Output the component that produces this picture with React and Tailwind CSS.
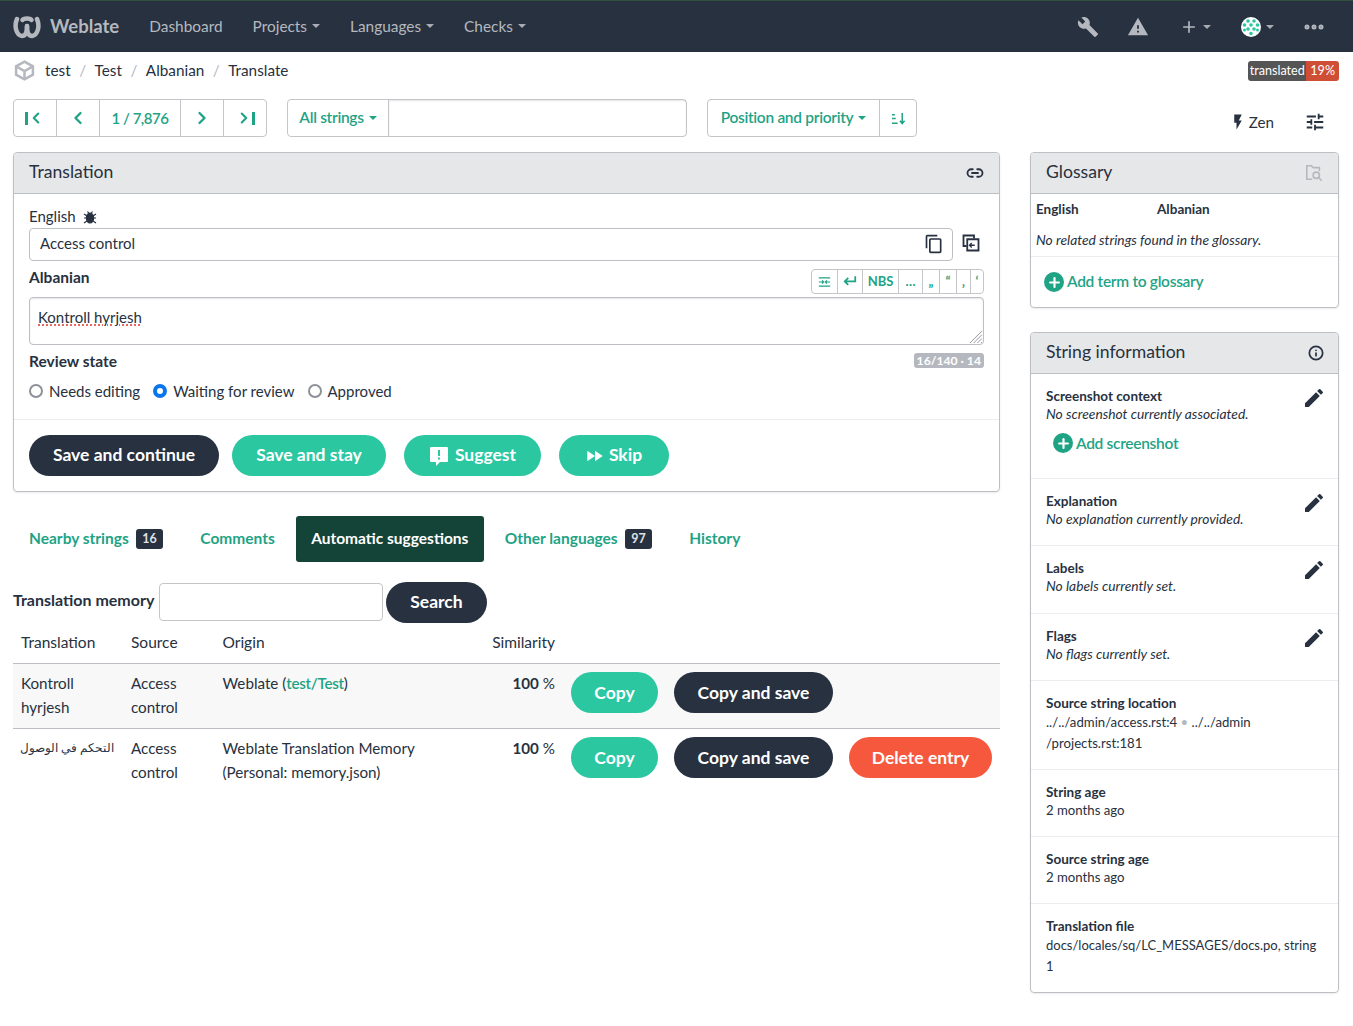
import { Plus, Ellipsis, Link2, Info, ChevronLeft, ChevronRight } from 'lucide-react';

const Caret = ({ className = 'border-t-[#a9adb3]' }) => (
  <span className={`ml-[5px] inline-block h-0 w-0 border-x-[4px] border-t-[4px] border-x-transparent ${className}`} />
);

const PencilIcon = () => (
  <svg viewBox="0 0 24 24" className="h-6 w-6 fill-[#273140]">
    <path d="M3 17.25V21h3.75L17.81 9.94l-3.75-3.75L3 17.25zM20.71 7.04a1 1 0 0 0 0-1.41l-2.34-2.34a1 1 0 0 0-1.41 0l-1.83 1.83 3.75 3.75 1.83-1.83z" />
  </svg>
);

const PlusCircle = () => (
  <span className="flex h-5 w-5 items-center justify-center rounded-full bg-[#1fa385]">
    <Plus size={15} strokeWidth={3.5} className="text-white" />
  </span>
);

const CopyIcon = ({ className }) => (
  <svg viewBox="0 0 24 24" className={`fill-[#273140] ${className}`}>
    <path d="M16 1H4a2 2 0 0 0-2 2v14h2V3h12V1zm3 4H8a2 2 0 0 0-2 2v14a2 2 0 0 0 2 2h11a2 2 0 0 0 2-2V7a2 2 0 0 0-2-2zm0 16H8V7h11v14z" />
  </svg>
);

function Navbar() {
  const links = ['Projects', 'Languages', 'Checks'];
  return (
    <nav className="flex h-[52px] items-center border-t border-[#31503f] bg-[#273140] pl-[13px] pr-[27px] text-[#b5b9bf]">
      <svg viewBox="0 0 28 24" className="h-[24px] w-[28px] fill-none stroke-[#b5b9bf]" strokeWidth="4.500" strokeLinecap="round">
        <path d="M4 4c-3 7-1 16 5 17 4 0 5-5 5-10" />
        <path d="M24 4c3 7 1 16-5 17-4 0-5-5-5-10" />
        <path d="M9.500 5c1-2 8-2 9 0" />
      </svg>
      <span className="ml-[9px] text-[18.500px] font-bold">Weblate</span>
      <span className="ml-[30px] text-[15.400px]">Dashboard</span>
      {links.map((label) => (
        <span key={label} className="ml-[30px] flex items-center text-[15.400px]">
          {label}
          <Caret />
        </span>
      ))}
      <div className="ml-auto flex items-center">
        <svg viewBox="0 0 24 24" className="h-[22px] w-[22px] fill-[#b5b9bf]">
          <path d="M22.7 19l-9.100-9.100c.9-2.300.4-5-1.500-6.900-2-2-5-2.400-7.400-1.300L9 6 6 9 1.600 4.700C.4 7.100.9 10.100 2.900 12.100c1.900 1.900 4.600 2.400 6.900 1.500l9.100 9.100c.4.4 1 .4 1.400 0l2.300-2.300c.5-.4.5-1.100.1-1.400z" />
        </svg>
        <svg viewBox="0 0 24 24" className="ml-[28px] h-[22px] w-[22px] fill-[#b5b9bf]">
          <path d="M1 21h22L12 2 1 21zm12-3h-2v-2h2v2zm0-4h-2v-4h2v4z" />
        </svg>
        <Plus size={18} strokeWidth={2.200} className="ml-[31px]" />
        <Caret />
        <svg viewBox="0 0 20 20" className="ml-[30px] h-5 w-5">
          <circle cx="10" cy="10" r="10" fill="#fff" />
          <g fill="#2bc79f">
            <circle cx="7" cy="4" r="1.800" />
            <circle cx="13" cy="4" r="1.800" />
            <circle cx="3.500" cy="8" r="1.800" />
            <circle cx="10" cy="8" r="1.800" />
            <circle cx="16.500" cy="8" r="1.800" />
            <circle cx="7" cy="12" r="1.800" />
            <circle cx="13" cy="12" r="1.800" />
            <circle cx="3.500" cy="13" r="1.500" />
            <circle cx="16.500" cy="13" r="1.500" />
            <circle cx="10" cy="16.500" r="1.800" />
          </g>
        </svg>
        <Caret />
        <Ellipsis size={24} strokeWidth={3} className="ml-[28px]" />
      </div>
    </nav>
  );
}

function Breadcrumb() {
  const crumbs = ['test', 'Test', 'Albanian', 'Translate'];
  return (
    <div className="flex h-[38px] items-center px-[14px] pb-[1px] text-[15.300px] text-[#273140]">
      <svg viewBox="0 0 20 20" className="mr-[10px] h-[21px] w-[21px] fill-none stroke-[#b5b9bf]" strokeWidth="2.400">
        <path d="M10 1.500 18 6v8l-8 4.500L2 14V6l8-4.500z" />
        <path d="M2 6l8 4.500L18 6M10 10.500v8" />
      </svg>
      {crumbs.map((crumb, index) => (
        <span key={crumb} className="flex items-center">
          {index > 0 && <span className="mx-[8.500px] text-[#b5b9bf]">/</span>}
          {crumb}
        </span>
      ))}
      <span className="ml-auto flex h-5 overflow-hidden rounded-[3px] text-[12.600px] leading-5 text-white">
        <span className="bg-[#555] px-[1.500px]">translated</span>
        <span className="bg-[#cf4f36] px-[4px]">19%</span>
      </span>
    </div>
  );
}

function Toolbar() {
  const cell = 'flex h-full items-center justify-center border-l border-[#c3c5c9] first:border-l-0';
  return (
    <div className="mt-[9px] flex h-[38px] items-center text-[15.500px] font-semibold tracking-[-0.3px] text-[#1fa385]">
      <div className="flex h-full w-[254px] rounded border border-[#c3c5c9]">
        <span className={`${cell} w-[42px]`}>
          <span className="h-[13px] w-[2.500px] bg-[#1fa385]" />
          <ChevronLeft size={18} strokeWidth={2.800} className="-ml-[1px]" />
        </span>
        <span className={`${cell} w-[43px]`}><ChevronLeft size={20} strokeWidth={2.800} /></span>
        <span className={`${cell} w-[81px] text-[15px] tracking-[-0.5px]`}>1 / 7,876</span>
        <span className={`${cell} w-[43px]`}><ChevronRight size={20} strokeWidth={2.800} /></span>
        <span className={`${cell} flex-1`}>
          <ChevronRight size={18} strokeWidth={2.800} className="-mr-[1px]" />
          <span className="h-[13px] w-[2.500px] bg-[#1fa385]" />
        </span>
      </div>
      <div className="ml-5 flex h-full w-[400px] rounded border border-[#c3c5c9]">
        <span className={`${cell} w-[100px]`}>All strings<Caret className="border-t-[#1fa385]" /></span>
        <span className={`${cell} flex-1 shadow-[inset_0_1px_2px_rgba(0,0,0,0.1)]`} />
      </div>
      <div className="ml-5 flex h-full w-[210px] rounded border border-[#c3c5c9]">
        <span className={`${cell} w-[171px]`}>Position and priority<Caret className="border-t-[#1fa385]" /></span>
        <span className={`${cell} flex-1`}>
          <svg viewBox="0 0 16 14" className="h-[13px] w-[15px] stroke-[#1fa385]" strokeWidth="1.600" fill="none">
            <path d="M1 3h3M1 7h4M1 12h6M12 1v11M9.500 9.500 12 12.500l2.500-3" />
          </svg>
        </span>
      </div>
      <div className="ml-auto flex items-center pt-[8px] text-[15.200px] font-normal tracking-normal text-[#273140]">
        <svg viewBox="0 0 24 24" className="h-[18px] w-[18px] fill-[#273140]">
          <path d="M7 2v11h3v9l7-12h-4l4-8z" />
        </svg>
        <span className="ml-[2px]">Zen</span>
        <svg viewBox="0 0 24 24" className="ml-[30px] mr-[13px] h-[22px] w-[22px] fill-[#273140]">
          <path d="M3 17v2h6v-2H3zM3 5v2h10V5H3zm10 16v-2h8v-2h-8v-2h-2v6h2zM7 9v2H3v2h4v2h2V9H7zm14 4v-2H11v2h10zm-6-4h2V7h4V5h-4V3h-2v6z" />
        </svg>
      </div>
    </div>
  );
}

function Pill({ tone, className = '', children }) {
  const tones = {
    dark: 'bg-[#273140]',
    green: 'bg-[#2bc7a1]',
    red: 'bg-[#f6583e]',
  };
  return (
    <span className={`flex h-[41px] items-center justify-center rounded-[21px] text-[17.500px] font-bold text-white ${tones[tone]} ${className}`}>
      {children}
    </span>
  );
}

function PanelHeader({ children }) {
  return (
    <header className="flex h-[41px] items-center justify-between rounded-t border-b border-[#bcbfc4] bg-[#e6e7e9] px-[15px] pb-[1px] text-[17.600px] text-[#273140]">
      {children}
    </header>
  );
}

function TranslationPanel() {
  const tools = [
    ['tab', 25],
    ['ret', 25],
    ['NBS', 36],
    ['…', 24],
    ['„', 17],
    ['“', 17],
    ['‚', 14],
    ['‘', 13],
  ];
  return (
    <section className="rounded border border-[#bcbfc4] shadow-[0_1px_2px_rgba(0,0,0,0.08)]">
      <PanelHeader>
        Translation
        <Link2 size={18} strokeWidth={2.400} />
      </PanelHeader>
      <div className="px-[15px] pt-[11px] text-[15px] text-[#273140]">
        <div className="flex h-[23px] items-center">
          English
          <svg viewBox="0 0 14 14" className="ml-[7px] h-[14px] w-[14px] fill-[#273140] stroke-[#273140]" strokeWidth="1.200">
            <ellipse cx="7" cy="8" rx="3.600" ry="5" />
            <path d="M1 4l3 2M13 4l-3 2M1 8h3M13 8h-3M1 13l3-2M13 13l-3-2M4.500 1.500 6 3.500M9.500 1.500 8 3.500" fill="none" />
          </svg>
        </div>
        <div className="flex items-center">
          <div className="flex h-[33px] w-[924px] items-center justify-between rounded border border-[#bcbfc4] pb-[2px] pl-[10px] pr-[8px]">
            Access control
            <CopyIcon className="h-5 w-5" />
          </div>
          <svg viewBox="0 0 24 24" className="-mt-[3px] ml-[9px] h-[18px] w-[18px] fill-none stroke-[#273140]" strokeWidth="2.400">
            <path d="M16 6V2H2v14h4" />
            <path d="M7 7h15v15H7z" />
            <path d="M17 15h-7M13 12l-3 3 3 3" strokeWidth="1.800" />
          </svg>
        </div>
        <div className="mt-[8px] flex h-[25px] items-start justify-between">
          <b className="text-[15.500px] font-bold leading-4">Albanian</b>
          <div className="flex h-[25px] rounded border border-[#c3c5c9] text-[13px] font-bold text-[#1fa385]">
            {tools.map(([label, width]) => (
              <span
                key={label}
                style={{ width }}
                className="flex items-center justify-center border-l border-[#c3c5c9] first:border-l-0"
              >
                {label === 'tab' ? (
                  <svg viewBox="0 0 16 14" className="h-[12px] w-[13px] fill-none stroke-[#1fa385]" strokeWidth="1.400">
                    <path d="M1 2h14M1 12h14M1 7h6M5 5l2 2-2 2M15 7H9M11 5 9 7l2 2" />
                  </svg>
                ) : label === 'ret' ? (
                  <svg viewBox="0 0 16 14" className="-mt-[3px] h-[13px] w-[14px] fill-none stroke-[#1fa385]" strokeWidth="2">
                    <path d="M14 2v6H2M6 4 2 8l4 4" />
                  </svg>
                ) : (
                  label
                )}
              </span>
            ))}
          </div>
        </div>
        <div className="relative mt-[3px] h-[48px] rounded border border-[#bcbfc4] pl-[8px] pt-[8px] shadow-[inset_0_1px_2px_rgba(0,0,0,0.1)]">
          <span className="underline decoration-[#e0342b] decoration-dotted underline-offset-2">Kontroll hyrjesh</span>
          <svg viewBox="0 0 14 14" className="absolute bottom-[1px] right-[1px] h-[13px] w-[13px] stroke-[#8d9198]" strokeWidth="1">
            <path d="M1 14 14 1M5 14l9-9M9 14l5-5M13 14l1-1" />
          </svg>
        </div>
        <div className="mt-[7px] flex h-[20px] items-center justify-between">
          <b className="text-[15.500px] font-bold">Review state</b>
          <span className="-mt-[4px] rounded-[3px] bg-[#b5b9bf] px-[3px] text-[12.200px] font-bold leading-[15px] text-white">16/140 · 14</span>
        </div>
        <div className="mt-[9px] flex h-[20px] items-center">
          <span className="h-[14px] w-[14px] rounded-full border-2 border-[#8d9198]" />
          <span className="ml-[6px]">Needs editing</span>
          <span className="ml-[13px] h-[14px] w-[14px] rounded-full border-[4px] border-[#0a75ec]" />
          <span className="ml-[6px]">Waiting for review</span>
          <span className="ml-[13px] h-[14px] w-[14px] rounded-full border-2 border-[#8d9198]" />
          <span className="ml-[6px]">Approved</span>
        </div>
      </div>
      <div className="mt-[18px] flex gap-[13px] border-t border-[#eceded] p-[15px]">
        <Pill tone="dark" className="w-[190px]">Save and continue</Pill>
        <Pill tone="green" className="mr-[5px] w-[154px]">Save and stay</Pill>
        <Pill tone="green" className="mr-[5px] w-[137px]">
          <svg viewBox="0 0 20 20" className="mr-[6px] h-5 w-5">
            <path fill="#fff" d="M2 1h16a1 1 0 0 1 1 1v13a1 1 0 0 1-1 1h-7l-4 4v-4H2a1 1 0 0 1-1-1V2a1 1 0 0 1 1-1z" />
            <path fill="#2bc7a1" d="M9 4h2v6H9zM9 11.500h2v2H9z" />
          </svg>
          Suggest
        </Pill>
        <Pill tone="green" className="w-[110px]">
          <svg viewBox="0 0 20 14" className="mr-[5px] h-[12px] w-[18px] fill-white">
            <path d="M1 1l9 6-9 6zM10 1l9 6-9 6z" />
          </svg>
          Skip
        </Pill>
      </div>
    </section>
  );
}

function Tabs() {
  const Badge = ({ children }) => (
    <span className="ml-[7px] rounded-[3px] bg-[#273140] px-[6.500px] text-[12.500px] font-bold leading-[20px] text-[#dfe1e4]">{children}</span>
  );
  const tab = 'flex h-[46px] items-center text-[15.500px] font-bold';
  return (
    <div className="mt-6 flex text-[#1fa385]">
      <span className={`${tab} pl-[16px] pr-[37px]`}>Nearby strings<Badge>16</Badge></span>
      <span className={`${tab} pr-[21px]`}>Comments</span>
      <span className={`${tab} w-[188px] justify-center rounded-[3px] bg-[#144338] text-white`}>Automatic suggestions</span>
      <span className={`${tab} pl-[21px] pr-[37px]`}>Other languages<Badge>97</Badge></span>
      <span className={tab}>History</span>
    </div>
  );
}

function Suggestions() {
  const rows = [
    {
      text: 'Kontroll hyrjesh',
      origin: <>Weblate (<span className="font-semibold tracking-[-0.3px] text-[#1fa385]">test/Test</span>)</>,
      shaded: true,
    },
    {
      text: <span dir="rtl" className="-mr-[7px] block whitespace-nowrap text-[12px]">التحكم في الوصول</span>,
      origin: <>Weblate Translation Memory<br />(Personal: memory.json)</>,
      remove: true,
    },
  ];
  return (
    <>
      <div className="mt-5 flex h-[41px] items-center pb-[1px] text-[#273140]">
        <b className="mb-[5px] w-[146px] whitespace-nowrap text-[16px] font-bold">Translation memory</b>
        <span className="h-[38px] w-[224px] rounded border border-[#c3c5c9]" />
        <Pill tone="dark" className="ml-[3px] w-[101px]">Search</Pill>
      </div>
      <div className="mt-[2px] flex h-[39px] items-center border-b border-[#bcbfc4] pb-[2px] text-[15.500px] text-[#273140]">
        <span className="w-[118px] pl-2">Translation</span>
        <span className="w-[91.500px]">Source</span>
        <span className="w-[268.500px]">Origin</span>
        <span className="w-[64px] text-right">Similarity</span>
      </div>
      {rows.map((row, index) => (
        <div key={index} className={`flex h-[65px] items-start border-b pt-[7px] text-[15.200px] leading-6 text-[#273140] ${row.shaded ? 'border-[#bcbfc4] bg-[#f8f8f8]' : 'border-transparent'}`}>
          <span className="w-[118px] pl-2 pr-6">{row.text}</span>
          <span className="w-[91.500px] pr-8">Access control</span>
          <span className="w-[268.500px]">{row.origin}</span>
          <span className="w-[64px] text-right"><b>100</b> %</span>
          <div className="ml-4 mt-[1px] flex">
            <Pill tone="green" className="w-[87px]">Copy</Pill>
            <Pill tone="dark" className="ml-4 w-[159px]">Copy and save</Pill>
            {row.remove && <Pill tone="red" className="ml-4 w-[143px]">Delete entry</Pill>}
          </div>
        </div>
      ))}
    </>
  );
}

function Glossary() {
  return (
    <section className="rounded border border-[#bcbfc4] shadow-[0_1px_2px_rgba(0,0,0,0.08)]">
      <PanelHeader>
        Glossary
        <svg viewBox="0 0 20 20" className="h-[18px] w-[18px] fill-none stroke-[#b5b9bf]" strokeWidth="1.800">
          <path d="M8 17H2V2h5l2 2h7v4" />
          <circle cx="12.500" cy="12.500" r="3.500" />
          <path d="m15 15 3.500 3.500" />
        </svg>
      </PanelHeader>
      <div className="flex px-[5px] pt-[6px] text-[13.500px] font-bold leading-[18px] text-[#273140]">
        <span className="w-[121px]">English</span>
        <span>Albanian</span>
      </div>
      <p className="px-[5px] pt-[13px] text-[13.800px] italic leading-[18px] text-[#273140]">No related strings found in the glossary.</p>
      <div className="mt-[7px] flex h-[51px] items-center gap-[3px] border-t border-[#eceded] pl-[13px] text-[15.500px] font-semibold tracking-[-0.3px] text-[#1fa385]">
        <PlusCircle />
        Add term to glossary
      </div>
    </section>
  );
}

function InfoBlock({ title, editable, height, children }) {
  return (
    <div style={{ height }} className="relative border-b border-[#eceded] px-[15px] pt-[13px] text-[13.200px] leading-[18px] text-[#273140] last:border-b-0">
      <b className="block text-[13.500px] font-bold">{title}</b>
      {children}
      {editable && (
        <span className="absolute right-[12px] top-[12px]"><PencilIcon /></span>
      )}
    </div>
  );
}

function StringInfo() {
  const note = 'text-[13.800px] italic';
  return (
    <section className="mt-6 rounded border border-[#bcbfc4] shadow-[0_1px_2px_rgba(0,0,0,0.08)]">
      <PanelHeader>
        String information
        <Info size={16} strokeWidth={2.600} className="-mr-[1px]" />
      </PanelHeader>
      <InfoBlock title="Screenshot context" editable height={105}>
        <p className={note}>No screenshot currently associated.</p>
        <div className="ml-[7px] mt-[10px] flex items-center gap-[3px] text-[15.500px] font-semibold tracking-[-0.3px] text-[#1fa385]">
          <PlusCircle />
          Add screenshot
        </div>
      </InfoBlock>
      <InfoBlock title="Explanation" editable height={67}><p className={note}>No explanation currently provided.</p></InfoBlock>
      <InfoBlock title="Labels" editable height={68}><p className={note}>No labels currently set.</p></InfoBlock>
      <InfoBlock title="Flags" editable height={67}><p className={note}>No flags currently set.</p></InfoBlock>
      <InfoBlock title="Source string location" height={89}>
        <p className="leading-[21px]">../../admin/access.rst:4 <span className="text-[#b5b9bf]">•</span> ../../admin<br />/projects.rst:181</p>
      </InfoBlock>
      <InfoBlock title="String age" height={67}>2 months ago</InfoBlock>
      <InfoBlock title="Source string age" height={67}>2 months ago</InfoBlock>
      <InfoBlock title="Translation file" height={88}>
        <p className="text-[13px] leading-[21px]">docs/locales/sq/LC_MESSAGES/docs.po, string 1</p>
      </InfoBlock>
    </section>
  );
}

export default function App() {
  return (
    <div className="min-h-[1026px] bg-white font-['Lato','Open_Sans',sans-serif]">
      <Navbar />
      <Breadcrumb />
      <div className="pl-[13px] pr-[14px]">
        <Toolbar />
        <div className="mt-[15px] flex items-start">
          <main className="w-[987px]">
            <TranslationPanel />
            <Tabs />
            <Suggestions />
          </main>
          <aside className="ml-[30px] w-[309px]">
            <Glossary />
            <StringInfo />
          </aside>
        </div>
      </div>
    </div>
  );
}
